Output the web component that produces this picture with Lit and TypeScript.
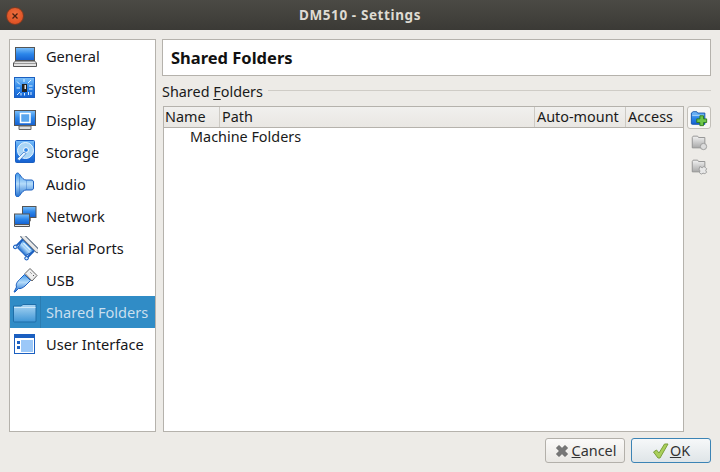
import { LitElement, html, css, svg } from "lit";
import { customElement } from "lit/decorators.js";

const defs = svg`<defs>
<linearGradient id="b" x1="0" y1="0" x2="0" y2="1"><stop offset="0" stop-color="#7cc0fa"/><stop offset=".5" stop-color="#2b86ea"/><stop offset="1" stop-color="#1560d0"/></linearGradient>
<linearGradient id="h" x1="0" y1="0" x2="0" y2="1"><stop offset="0" stop-color="#3f97ea"/><stop offset=".45" stop-color="#b5dcfa"/><stop offset="1" stop-color="#1f6fd0"/></linearGradient>
<linearGradient id="f" x1="0" y1="0" x2="0" y2="1"><stop offset="0" stop-color="#a9d5f3"/><stop offset="1" stop-color="#3f96d6"/></linearGradient>
<linearGradient id="g" x1="0" y1="0" x2="0" y2="1"><stop offset="0" stop-color="#f2f2f2"/><stop offset="1" stop-color="#a8a8a8"/></linearGradient>
</defs>`;

const icons: Record<string, unknown> = {
  general: svg`<rect x="2.500" y="3.500" width="19" height="13" fill="url(#b)" stroke="#555"/><path d="M2.500 17h19l2 2v3.500H0.500V19z" fill="#e4e4e4" stroke="#555"/><path d="M1 19.500h22" stroke="#999"/>`,
  system: svg`<rect x="1.500" y="1.500" width="20" height="20" fill="url(#b)" stroke="#1b5fc0"/><rect x="9" y="8" width="5" height="8" fill="#222"/><rect x="11.500" y="9" width="1.500" height="4" fill="#ddd"/><path d="M11 6V3M15 7l3-3M16 10h3.500M16 13h3.500M15.500 16v3M18 16v3M7 16l-3 3M7 12H3.500M7 8.500 4 5.500M8 17v2.500M11.500 17v2.500" stroke="#d9efff" fill="none"/>`,
  display: svg`<rect x="1.500" y="2.500" width="21" height="15" fill="url(#b)" stroke="#555"/><rect x="7.500" y="5.500" width="9.500" height="9" fill="#5aa6ee" stroke="#fff" stroke-width="1.500"/><path d="M6 18h12v3.500H6z" fill="#ddd" stroke="#666"/>`,
  storage: svg`<rect x="2.500" y="0.500" width="19" height="22" rx="1" fill="url(#b)" stroke="#1b5fc0"/><circle cx="12.500" cy="10.500" r="8" fill="#a9d5f6" stroke="#eaf6ff"/><circle cx="13" cy="10" r="2.400" fill="#2b86ea" stroke="#fff"/><path d="M4 19l7-7 2 1.500-6.500 7z" fill="#eaf6ff" stroke="#2b70c8" stroke-width=".7"/>`,
  audio: svg`<path d="M2.500 4c0-2 1-3 2-3s2 1 2.500 2c2 3 4 5 6 5h5c1.500 0 2.500.5 2.500 2v6c0 1.500-1 2-2.500 2h-5c-2 0-4 2-6 5-.5 1-1.500 2-2.500 2s-2-1-2-3z" fill="url(#h)" stroke="#1b5fc0"/><path d="M6.500 3.500V21.500M13.500 8.500v9" stroke="#1b5fc0" stroke-width=".6" opacity=".6"/>`,
  network: svg`<rect x="9.500" y="2.500" width="13.500" height="11" fill="url(#b)" stroke="#555"/><path d="M17 14v2.500h-3" fill="none" stroke="#555" stroke-width="1.500"/><rect x="1.500" y="10" width="15" height="10.500" fill="url(#b)" stroke="#555"/><path d="M1.500 20.500h15v2H1.500z" fill="#e4e4e4" stroke="#555"/>`,
  serial: svg`<g transform="translate(12.500 12) rotate(45)"><path d="M-8-4H8L5.500 5.500h-11z" fill="url(#h)" stroke="#1b5fc0"/><rect x="-12" y="-8.500" width="24" height="4" rx="1.500" fill="#e9e9e9" stroke="#5c6d80"/><path d="M-5-2H5" stroke="#d9efff" stroke-width="1.500"/><path d="M-8-4v9M8-4v9" stroke="#1b5fc0" stroke-width="2"/><circle cx="-8" cy="6.500" r="1.700" fill="#d9efff" stroke="#1b5fc0"/><circle cx="8" cy="6.500" r="1.700" fill="#d9efff" stroke="#1b5fc0"/></g>`,
  usb: svg`<path d="M1 24 3.500 19c-1-3 1-5.500 3-7.500l5-5 6 6-5.500 5.500c-2.500 2-4.500 3-6.500 2.500L2 24z" fill="url(#h)" stroke="#1b5fc0"/><path d="M12 5.500l5-5 7 7-5 5.500z" fill="#eee" stroke="#666"/><path d="M17.500 4.500l1 1M20 7l1 1" stroke="#555"/>`,
  shared: svg`<path d="M0.500 6V21a1 1 0 0 0 1 1H22a1 1 0 0 0 1-1V4.500H10L8 6z" fill="url(#f)" stroke="#1f6ea8"/><path d="M1 7.500h21.500" stroke="#cfe8f8"/>`,
  ui: svg`<rect x="1.500" y="2.500" width="20" height="19" fill="#fff" stroke="#1b5fc0"/><rect x="2" y="3" width="19" height="3" fill="#1b5fc0"/><rect x="8" y="8" width="12" height="12" fill="#9cc8f8"/><rect x="4" y="9" width="3" height="3" fill="#1b5fc0"/><rect x="4" y="14" width="3" height="3" fill="#1b5fc0"/>`,
};

const items: [string, string][] = [
  ["general", "General"], ["system", "System"], ["display", "Display"], ["storage", "Storage"], ["audio", "Audio"],
  ["network", "Network"], ["serial", "Serial Ports"], ["usb", "USB"], ["shared", "Shared Folders"], ["ui", "User Interface"],
];

@customElement("app-root")
export class AppRoot extends LitElement {
  static styles = css`
    :host { display: flex; flex-direction: column; width: 720px; height: 472px; background: #edebe7; overflow: hidden;
      font-family: "Noto Sans", "Open Sans", sans-serif; font-size: 14.4px; color: #1a1a1a; }
    .title { height: 30px; flex: none; background: linear-gradient(#4b4a45, #3b3a36); display: flex; align-items: center; justify-content: center; position: relative;
      color: #dfdbd2; font-weight: 700; font-size: 13.500px; letter-spacing: .6px; }
    .close { position: absolute; left: 6px; top: 7px; width: 16px; height: 16px; border-radius: 50%; background: radial-gradient(circle at 50% 40%, #f0703f, #d6461a); border: 0.5px solid #7a3a22; display: flex; }
    .main { flex: 1; display: flex; gap: 6px; padding: 9px 9px 0; min-height: 0; }
    .side { width: 147px; height: 393px; flex: none; box-sizing: border-box; border: 1px solid #b5b2ac; background: #fff; font-size: 14.600px; }
    .row { height: 32px; display: flex; align-items: center; color: #16161a; }
    .row .ic { width: 30px; flex: none; padding-left: 3px; height: 32px; display: flex; align-items: center; box-sizing: border-box; }
    .row .ic svg { display: block; }
    .row .tx { padding-left: 6px; height: 100%; display: flex; align-items: center; flex: 1; white-space: nowrap; }
    .row.sel { background: #308cc6; color: #c9dfee; }
    .row.sel .tx { border-left: 1px solid #2a7db2; padding-left: 5px; }
    .content { flex: 1; display: flex; flex-direction: column; min-width: 0; }
    .head { height: 37px; box-sizing: border-box; border: 1px solid #b5b2ac; background: #fff; display: flex; align-items: center; padding-left: 8px; font-weight: 700; font-size: 16.500px; color: #111; }
    .group { display: flex; align-items: center; gap: 5px; height: 20px; margin-top: 5px; }
    .group u { text-underline-offset: 2px; }
    .group i { flex: 1; height: 1px; background: #cfccc6; margin-top: -2px; }
    .lower { display: flex; gap: 3px; margin-top: 5px; padding-left: 1px; height: 326px; }
    .table { flex: 1; box-sizing: border-box; border: 1px solid #b5b2ac; background: #fff; min-width: 0; }
    .thead { display: flex; height: 20px; background: linear-gradient(#f1f0ee, #e9e7e3); border-bottom: 1px solid #b5b2ac; }
    .th { box-sizing: border-box; border-right: 1px solid #cdcac4; padding-left: 2px; display: flex; align-items: center; white-space: nowrap; line-height: 20px; }
    .th.first { padding-left: 1px; }
    .th:last-child { border-right: 0; flex: 1; }
    .tr { padding-left: 26px; height: 17px; display: flex; align-items: center; }
    .tools { width: 24px; flex: none; display: flex; flex-direction: column; align-items: center; gap: 1px; }
    .tool { width: 24px; height: 23px; box-sizing: border-box; display: flex; align-items: center; justify-content: center; border: 1px solid transparent; border-radius: 3px; }
    .tool.on { border-color: #c2bfb9; background: #f8f7f5; }
    .foot { height: 40px; flex: none; display: flex; justify-content: flex-end; gap: 6px; padding: 6px 9px 0 0; box-sizing: border-box; }
    .btn { height: 25px; box-sizing: border-box; border: 1px solid #b3b0aa; border-radius: 3px; background: linear-gradient(#fbfaf9, #e9e7e3); display: flex; align-items: center; justify-content: center; gap: 2px; color: #333; }
    .btn.cancel { width: 80px; }
    .btn.ok { width: 80px; gap: 0; border-color: #3c84b5; background: linear-gradient(#f6f8f9, #dfe5e8); }
  `;

  render() {
    return html`
      <div class="title">
        <div class="close"><svg width="16" height="16" viewBox="0 0 16 16"><path d="M5.500 5.500l5 5M10.500 5.500l-5 5" stroke="#4a2010" stroke-width="1.300"/></svg></div>
        DM510 - Settings
      </div>
      <svg width="0" height="0" style="position:absolute">${defs}</svg>
      <div class="main">
        <div class="side">
          ${items.map(([k, t]) => html`<div class="row ${k === "shared" ? "sel" : ""}">
            <div class="ic"><svg width="25" height="25" viewBox="0 0 25 25">${icons[k]}</svg></div>
            <div class="tx">${t}</div></div>`)}
        </div>
        <div class="content">
          <div class="head">Shared Folders</div>
          <div class="group"><span>Shared <u>F</u>olders</span><i></i></div>
          <div class="lower">
            <div class="table">
              <div class="thead">
                <div class="th first" style="width:56px">Name</div>
                <div class="th" style="width:315px">Path</div>
                <div class="th" style="width:91px">Auto-mount</div>
                <div class="th">Access</div>
              </div>
              <div class="tr">Machine Folders</div>
            </div>
            <div class="tools">
              <div class="tool on"><svg width="18" height="18" viewBox="0 0 20 20"><path d="M1.500 4.500V16a1 1 0 0 0 1 1h14V4.500H8.500L7.500 3h-4z" fill="url(#b)" stroke="#1250a8"/><path d="M2.500 7h13" stroke="#bfe0fb"/><path d="M11 7.500h4v3.500h3.500v4H15v3.500h-4V15H7.500v-4H11z" fill="#6fc74a" stroke="#2c7a1c"/></svg></div>
              <div class="tool"><svg width="18" height="18" viewBox="0 0 20 20"><path d="M2.500 5V16.500h14V5H9.500L8.500 3.500h-5z" fill="url(#g)" stroke="#8f8f8f"/><circle cx="15" cy="15" r="3.500" fill="#dcdcdc" stroke="#999"/></svg></div>
              <div class="tool"><svg width="18" height="18" viewBox="0 0 20 20"><path d="M2.500 5V16.500h14V5H9.500L8.500 3.500h-5z" fill="url(#g)" stroke="#8f8f8f"/><path d="M11 10.500l2.500 1.500 2-1.500 2 1.500 1 1-1 2 1 2-2 1.500-2-.5-2 1-2-1.500.5-2-1-2z" fill="#e8e8e8" stroke="#999"/></svg></div>
            </div>
          </div>
        </div>
      </div>
      <div class="foot">
        <div class="btn cancel"><svg width="16" height="16" viewBox="0 0 16 16"><path d="M2.500 5 5 2.500l3 3 3-3L13.500 5l-3 3 3 3-2.500 2.500-3-3-3 3L2.500 11l3-3z" fill="#777" stroke="#666"/></svg><span><u>C</u>ancel</span></div>
        <div class="btn ok"><svg width="18" height="18" viewBox="0 0 18 18"><path d="M1.500 10l3-2 2.500 3L12.500 2h3.500L8 16H6z" fill="#a9cf5a" stroke="#7aa03a"/></svg><span><u>O</u>K</span></div>
      </div>
    `;
  }
}
